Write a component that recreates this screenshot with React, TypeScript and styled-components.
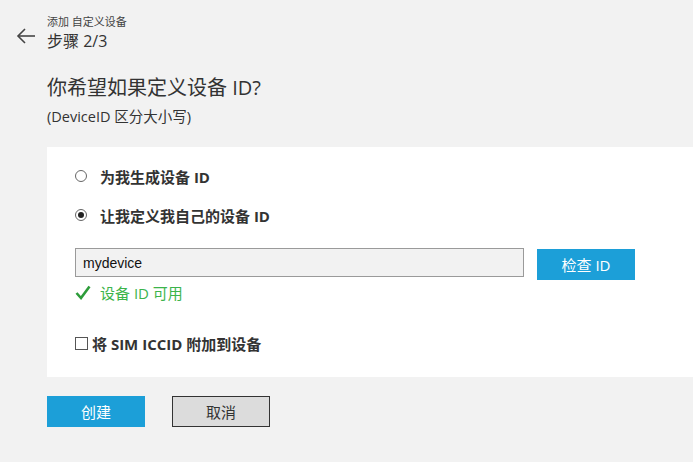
import React from "react";
import styled, { createGlobalStyle } from "styled-components";

const Global = createGlobalStyle`
  html, body { margin: 0; padding: 0; background: #f2f2f2; }
  body { font-family: "Open Sans", "Noto Sans CJK SC", sans-serif; color: #333; }
`;

const Page = styled.div`
  width: 693px;
  height: 462px;
  background: #f2f2f2;
  overflow: hidden;
  display: flex;
  flex-direction: column;
`;

const Header = styled.div`
  display: flex;
  align-items: flex-start;
  padding: 13px 0 0 15px;
`;

const BackBtn = styled.div`
  width: 22px;
  height: 22px;
  margin-top: 12px;
  margin-right: 10px;
  display: flex;
  align-items: center;
  justify-content: center;
`;

const Titles = styled.div`
  display: flex;
  flex-direction: column;
`;

const Crumb = styled.div`
  font-size: 11px;
  line-height: 18px;
  color: #444;
`;

const Step = styled.div`
  font-size: 16px;
  line-height: 20px;
  color: #333;
`;

const Body = styled.div`
  padding-left: 47px;
  display: flex;
  flex-direction: column;
`;

const Question = styled.h1`
  margin: 24px 0 0 0;
  font-size: 20px;
  font-weight: 400;
  line-height: 26px;
  color: #333;
`;

const Note = styled.div`
  margin-top: 6px;
  font-size: 14.5px;
  line-height: 20px;
  color: #333;
`;

const Panel = styled.div`
  margin-top: 20px;
  background: #fff;
  height: 230px;
  box-sizing: border-box;
  padding: 18px 0 0 28px;
  display: flex;
  flex-direction: column;
`;

const RadioRow = styled.label<{ gap: number }>`
  display: flex;
  align-items: center;
  height: 22px;
  margin-bottom: ${(p) => p.gap}px;
  font-size: 15px;
  font-weight: 700;
  color: #333;
`;

const RadioDot = styled.span<{ checked?: boolean }>`
  width: 12px;
  height: 12px;
  border: 1px solid #666;
  border-radius: 50%;
  margin-right: 13px;
  box-sizing: border-box;
  display: flex;
  align-items: center;
  justify-content: center;
  &::after {
    content: "";
    width: 6px;
    height: 6px;
    border-radius: 50%;
    background: ${(p) => (p.checked ? "#222" : "transparent")};
  }
`;

const InputRow = styled.div`
  display: flex;
  align-items: flex-start;
`;

const TextInput = styled.div`
  width: 449px;
  height: 29px;
  box-sizing: border-box;
  border: 1px solid #9a9a9a;
  background: #f2f2f2;
  font-family: "Liberation Sans", Arial, sans-serif;
  font-size: 14px;
  color: #111;
  display: flex;
  align-items: center;
  padding-left: 7px;
`;

const Button = styled.button<{ primary?: boolean }>`
  width: 98px;
  height: 31px;
  box-sizing: border-box;
  font-family: inherit;
  font-size: 15px;
  padding: 0;
  cursor: pointer;
  background: ${(p) => (p.primary ? "#1c9fd8" : "#dcdcdc")};
  color: ${(p) => (p.primary ? "#fff" : "#333")};
  border: ${(p) => (p.primary ? "none" : "1px solid #333")};
`;

const CheckBtn = styled(Button)`
  margin-left: 13px;
  margin-top: 1px;
`;

const Valid = styled.div`
  display: flex;
  align-items: center;
  height: 22px;
  margin-top: 1px;
  color: #3cb44b;
  font-size: 15px;
  gap: 9px;
`;

const CheckRow = styled.label`
  display: flex;
  align-items: center;
  margin-top: 29px;
  height: 22px;
  font-size: 15px;
  font-weight: 700;
  color: #333;
`;

const Box = styled.span`
  width: 13px;
  height: 13px;
  box-sizing: border-box;
  border: 1px solid #555;
  margin-right: 4px;
`;

const Actions = styled.div`
  display: flex;
  gap: 27px;
  margin-top: 19px;
`;

export default function App() {
  return (
    <Page>
      <Global />
      <Header>
        <BackBtn>
          <svg width="20" height="16" viewBox="0 0 20 16" fill="none" stroke="#444" strokeWidth="1.6">
            <path d="M19 8H2" />
            <path d="M9 1L2 8l7 7" />
          </svg>
        </BackBtn>
        <Titles>
          <Crumb>添加 自定义设备</Crumb>
          <Step>步骤 2/3</Step>
        </Titles>
      </Header>
      <Body>
        <Question>你希望如果定义设备 ID?</Question>
        <Note>(DeviceID 区分大小写)</Note>
        <Panel>
          <RadioRow gap={17}>
            <RadioDot />
            为我生成设备 ID
          </RadioRow>
          <RadioRow gap={22}>
            <RadioDot checked />
            让我定义我自己的设备 ID
          </RadioRow>
          <InputRow>
            <TextInput>mydevice</TextInput>
            <CheckBtn primary>检查 ID</CheckBtn>
          </InputRow>
          <Valid>
            <svg width="16" height="15" viewBox="0 0 16 15" fill="none" stroke="#2d9c3a" strokeWidth="2.6">
              <path d="M1.5 8l4.5 5L14.5 1.5" />
            </svg>
            设备 ID 可用
          </Valid>
          <CheckRow>
            <Box />
            将 SIM ICCID 附加到设备
          </CheckRow>
        </Panel>
        <Actions>
          <Button primary>创建</Button>
          <Button>取消</Button>
        </Actions>
      </Body>
    </Page>
  );
}
